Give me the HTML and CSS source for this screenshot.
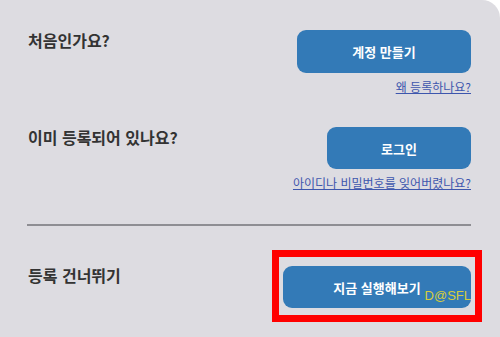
FILE: index.html
```html
<!DOCTYPE html>
<html lang="ko">
<head>
<meta charset="utf-8">
<title>등록</title>
<link rel="stylesheet" href="styles.css">
</head>
<body>
<main class="card">
  <section class="row row-first">
    <h2 class="label">처음인가요?</h2>
    <div class="actions">
      <a class="btn btn-create" href="#">계정 만들기</a>
      <a class="link" href="#">왜 등록하나요?</a>
    </div>
  </section>
  <section class="row row-second">
    <h2 class="label">이미 등록되어 있나요?</h2>
    <div class="actions">
      <a class="btn btn-login" href="#">로그인</a>
      <a class="link" href="#">아이디나 비밀번호를 잊어버렸나요?</a>
    </div>
  </section>
  <hr class="divider">
  <section class="row row-skip">
    <h2 class="label">등록 건너뛰기</h2>
    <div class="actions">
      <div class="highlight-wrap">
        <a class="btn btn-run" href="#">지금 실행해보기</a>
        <span class="highlight"></span>
        <span class="watermark">D@SFL</span>
      </div>
    </div>
  </section>
</main>
</body>
</html>
```
FILE: styles.css
```css
html, body {
  margin: 0;
  padding: 0;
  background: #ffffff;
}

body {
  font-family: "Noto Sans CJK KR", "Noto Sans", sans-serif;
}

.card {
  box-sizing: border-box;
  min-height: 337px;
  background: #dddce1;
  border-top-right-radius: 18px;
  padding: 30px 29px 0 28px;
}

.row {
  display: grid;
  grid-template-columns: 1fr auto;
  align-items: start;
}

.row-second {
  margin-top: 32px;
}

.label {
  margin: 0;
  font-size: 16px;
  line-height: 20px;
  font-weight: 700;
  color: #333333;
}

.row-skip .label {
  margin-top: -1px;
}

.actions {
  display: flex;
  flex-direction: column;
  align-items: flex-end;
}

.btn {
  display: flex;
  align-items: center;
  justify-content: center;
  box-sizing: border-box;
  height: 43px;
  border-radius: 9px;
  background: #337ab7;
  color: #ffffff;
  font-size: 13px;
  font-weight: 700;
  text-decoration: none;
}

.btn-create {
  width: 174px;
}

.btn-login {
  width: 144px;
  height: 42px;
}

.btn-run {
  width: 188px;
  height: 42px;
}

.link {
  margin-top: 6px;
  font-size: 12px;
  line-height: 16px;
  color: #3d56ad;
  text-decoration: underline;
}

.divider {
  margin: 33px 0 40px -1px;
  border: 0;
  border-top: 2px solid #8e8e93;
  height: 0;
}

.highlight-wrap {
  position: relative;
}

.highlight {
  position: absolute;
  top: -16px;
  left: -11px;
  right: -11px;
  bottom: -14px;
  border: 7px solid #ff0000;
  pointer-events: none;
}

.watermark {
  position: absolute;
  right: 0;
  bottom: 5px;
  font-family: "Liberation Sans", Arial, sans-serif;
  font-size: 13px;
  line-height: 15px;
  color: #d6cd3c;
}
```
